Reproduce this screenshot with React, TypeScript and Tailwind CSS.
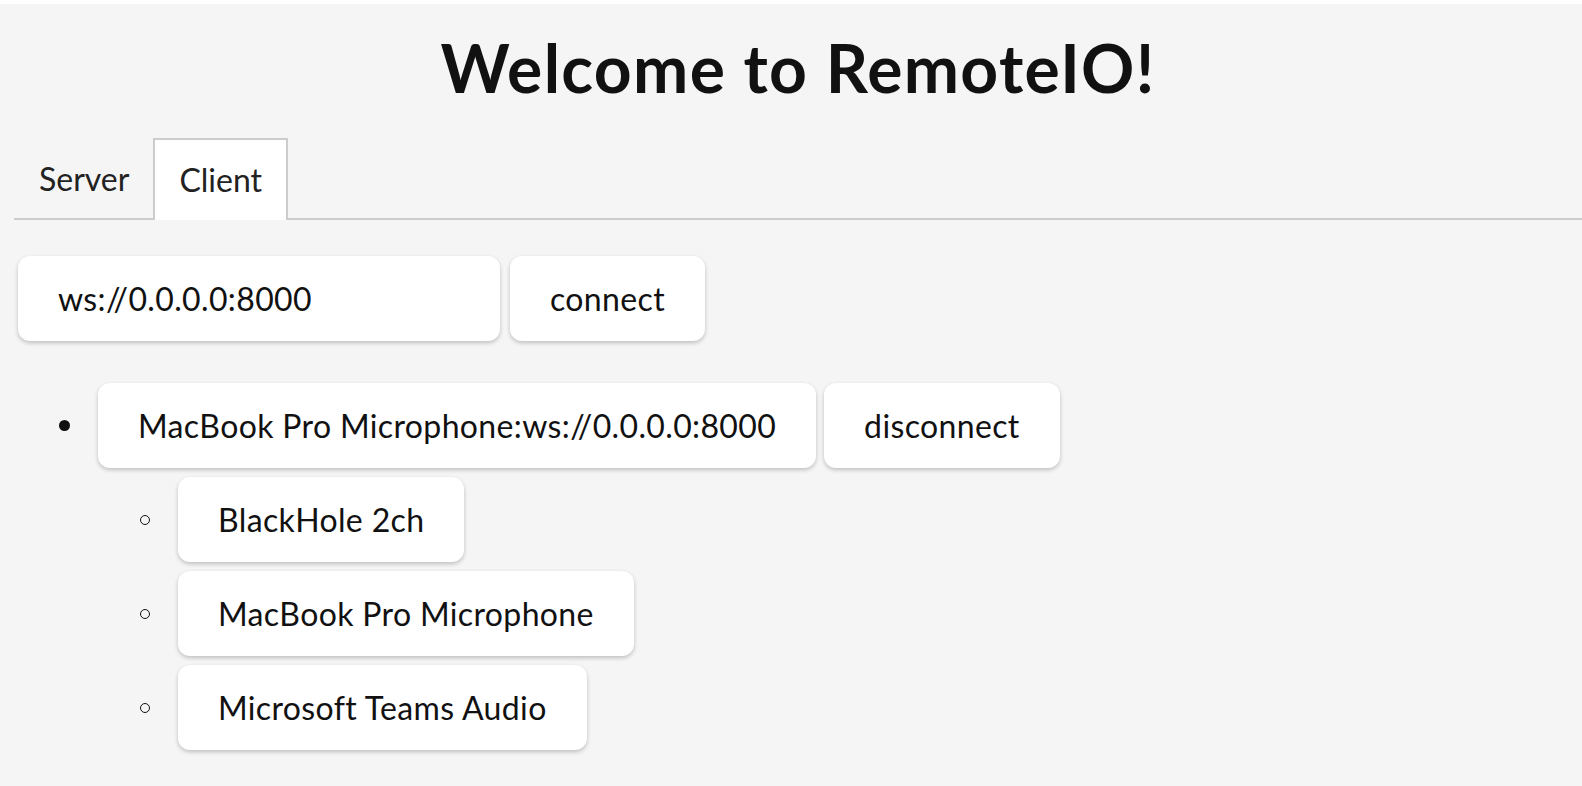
import React from "react";

const font = { fontFamily: "Lato, 'Noto Sans', sans-serif" };

function Btn({ children }: { children: React.ReactNode }) {
  return (
    <div className="flex h-[85px] items-center rounded-[12px] bg-white px-[40px] text-[32px] tracking-[0.36px] text-[#111] shadow-[0_2px_4px_rgba(0,0,0,0.22)] whitespace-nowrap">
      {children}
    </div>
  );
}

export default function App() {
  return (
    <div className="min-h-screen bg-white pt-[4px]" style={font}>
      <div className="min-h-[782px] bg-[#f5f5f5] pl-[14px]">
        <h1 className="pt-[25px] text-center text-[66px] font-bold leading-[77px] tracking-[1.3px] text-[#111]">
          Welcome to RemoteIO!
        </h1>
        <div className="mt-[32px] flex border-b-2 border-[#cccccc]">
          <div className="-mb-[2px] flex h-[82px] items-center border-2 border-transparent pl-[23px] pr-[22px] text-[32px] text-[#222]">
            Server
          </div>
          <div className="-mb-[2px] flex h-[82px] items-center border-2 border-b-0 border-[#cccccc] bg-white px-[24px] text-[32px] text-[#222]">
            Client
          </div>
        </div>
        <div className="pl-[4px]">
          <div className="mt-[36px] flex gap-[10px]">
            <div className="flex h-[85px] w-[482px] items-center rounded-[12px] bg-white pl-[40px] text-[32px] tracking-[0.36px] text-[#111] shadow-[0_2px_4px_rgba(0,0,0,0.22)]">
              ws://0.0.0.0:8000
            </div>
            <Btn>connect</Btn>
          </div>
          <div className="mt-[42px] flex flex-col gap-[9px]">
            <div className="flex items-center">
              <div className="w-[80px]">
                <div className="ml-[41px] h-[11px] w-[11px] rounded-full bg-[#111]" />
              </div>
              <div className="flex gap-[8px]">
                <Btn>MacBook Pro Microphone:ws://0.0.0.0:8000</Btn>
                <Btn>disconnect</Btn>
              </div>
            </div>
            {["BlackHole 2ch", "MacBook Pro Microphone", "Microsoft Teams Audio"].map((d) => (
              <div key={d} className="flex items-center pl-[80px]">
                <div className="w-[80px]">
                  <div className="ml-[42px] h-[10px] w-[10px] rounded-full border-[1.5px] border-[#111]" />
                </div>
                <Btn>{d}</Btn>
              </div>
            ))}
          </div>
        </div>
      </div>
    </div>
  );
}
